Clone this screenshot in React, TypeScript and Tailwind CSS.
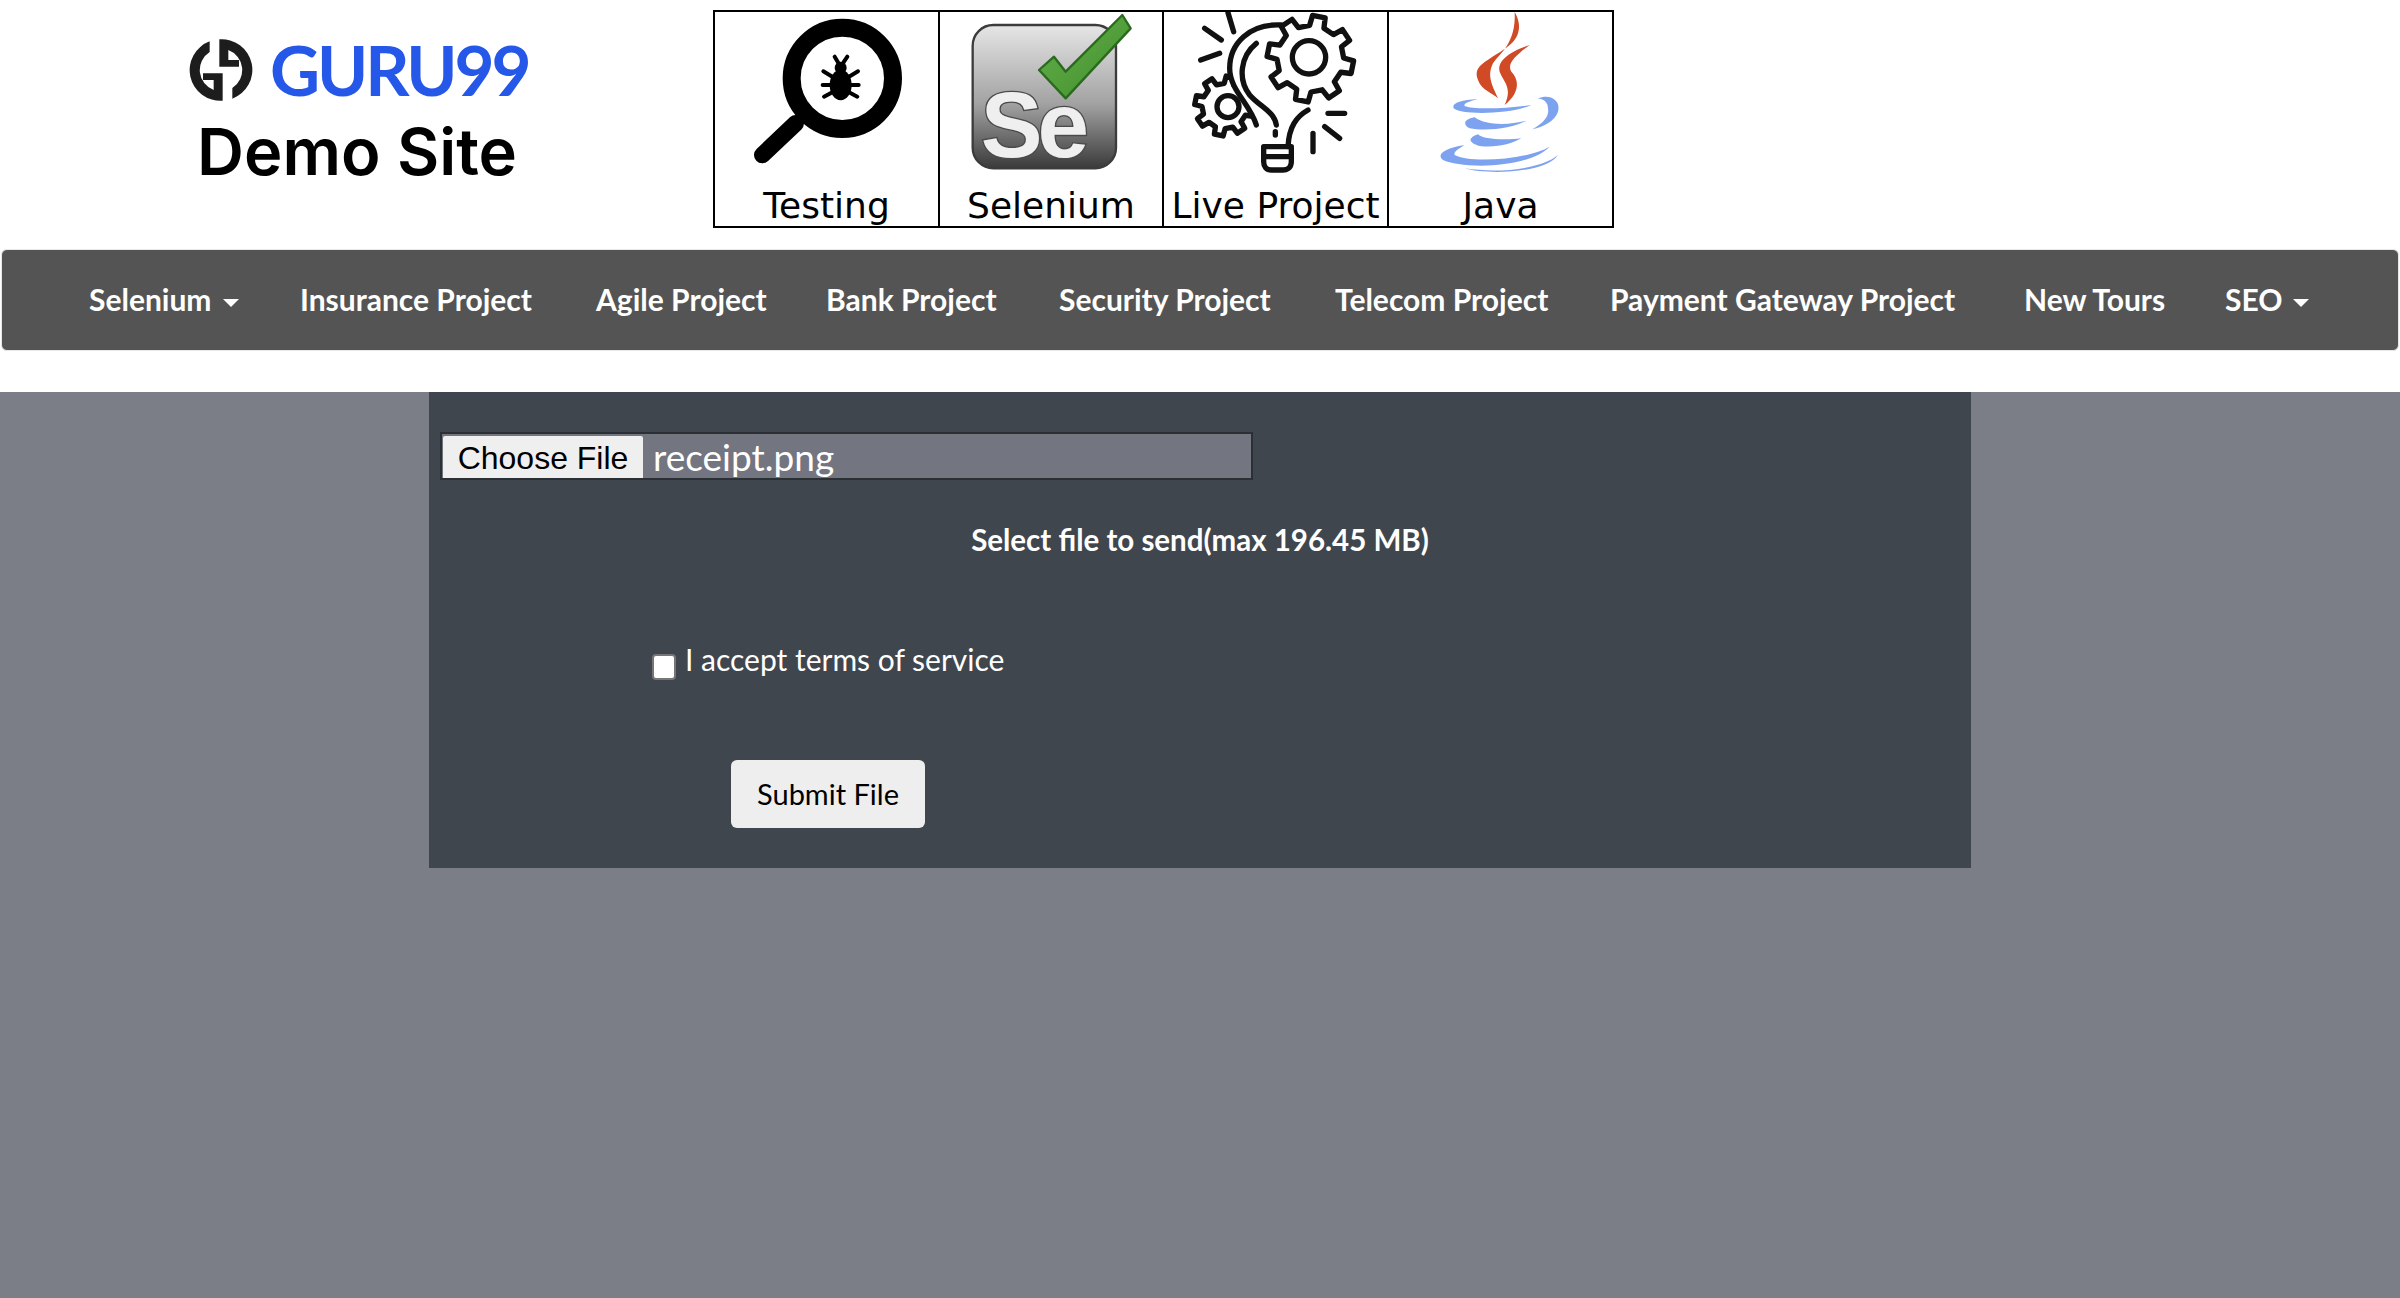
const navFont = "font-['Lato','Noto_Sans',sans-serif]";

const navItems = [
  { label: "Selenium", width: "w-[211px]", caret: true },
  { label: "Insurance Project", width: "w-[296px]" },
  { label: "Agile Project", width: "w-[230px]" },
  { label: "Bank Project", width: "w-[233px]" },
  { label: "Security Project", width: "w-[276px]" },
  { label: "Telecom Project", width: "w-[275px]" },
  { label: "Payment Gateway Project", width: "w-[414px]" },
  { label: "New Tours", width: "w-[201px]" },
  { label: "SEO", width: "w-[120px]", caret: true },
];

// builds a toothed outline for the gears in the Live Project icon
const gearPath = (cx: number, cy: number, outer: number, root: number, teeth: number) => {
  const step = (Math.PI * 2) / teeth;
  const pts: string[] = [];
  for (let i = 0; i < teeth; i++) {
    const a = i * step + 0.2;
    const at = (r: number, t: number) => {
      const x = cx + r * Math.cos(a + t * step);
      const y = cy + r * Math.sin(a + t * step);
      return `${x.toFixed(1)} ${y.toFixed(1)}`;
    };
    pts.push(at(root, -0.28), at(outer, -0.19), at(outer, 0.19), at(root, 0.28));
  }
  return `M${pts.join("L")}Z`;
};

const logoHalf =
  "M98 42A92 92 0 0 0 137 220V138H78V158H110V188A64 64 0 0 1 98 74Z";

const Logo = () => (
  <svg viewBox="36 32 192 192" className="w-[64px] h-[64px] shrink-0">
    <path d={logoHalf} fill="#1d1d1d" />
    <path d={logoHalf} fill="#1d1d1d" transform="rotate(180 132 128)" />
  </svg>
);

const TestingIcon = () => (
  <svg viewBox="40 36 675 540" className="w-[225px] h-[180px] shrink-0">
    <circle cx="425" cy="235" r="152" fill="none" stroke="#000" strokeWidth="54" />
    <path d="M285 370L185 465" stroke="#000" strokeWidth="50" strokeLinecap="round" />
    <ellipse cx="420" cy="255" rx="33" ry="46" fill="#000" />
    <circle cx="420" cy="203" r="18" fill="#000" />
    <path
      d="M420 200L402 170M420 200L440 170M395 230L368 214M445 230L472 214M393 255L366 255M447 255L474 255M398 275L370 290M442 275L470 290"
      stroke="#000"
      strokeWidth="12"
      strokeLinecap="round"
      fill="none"
    />
  </svg>
);

const SeleniumIcon = () => (
  <svg viewBox="715 36 675 540" className="w-[225px] h-[180px] shrink-0">
    <defs>
      <linearGradient id="seBox" x1="0" y1="0" x2="0" y2="1">
        <stop offset="0" stopColor="#e6e6e6" />
        <stop offset="0.55" stopColor="#a2a2a2" />
        <stop offset="1" stopColor="#3a3a3a" />
      </linearGradient>
      <linearGradient id="seCheck" x1="0" y1="0" x2="1" y2="1">
        <stop offset="0" stopColor="#66b04a" />
        <stop offset="1" stopColor="#3f8f2e" />
      </linearGradient>
    </defs>
    <rect x="816" y="75" width="430" height="430" rx="62" fill="url(#seBox)" stroke="#3c3c3c" strokeWidth="7" />
    <text
      x="840"
      y="470"
      fontSize="278"
      fontWeight="700"
      fontFamily="'Liberation Sans', sans-serif"
      fill="#efefef"
      stroke="#4a4a4a"
      strokeWidth="8"
      paintOrder="stroke"
      textLength="325"
    >
      Se
    </text>
    <path
      d="M1015 210L1060 170L1095 215L1265 45L1290 85L1095 295Z"
      fill="url(#seCheck)"
      stroke="#2a6a1f"
      strokeWidth="7"
      strokeLinejoin="round"
    />
  </svg>
);

const LiveProjectIcon = () => (
  <svg
    viewBox="40 36 675 540"
    className="w-[225px] h-[180px] shrink-0"
    fill="none"
    stroke="#111"
    strokeWidth="16"
    strokeLinecap="round"
    strokeLinejoin="round"
  >
    <path d={gearPath(225, 318, 90, 68, 8)} />
    <circle cx="235" cy="320" r="33" />
    <path
      d="M395 75C300 70 240 130 240 205C240 270 300 310 320 375C330 400 340 420 345 440H425C420 380 440 350 475 330L480 100Z"
      fill="#fff"
      stroke="none"
    />
    <path d="M395 75C300 70 240 130 240 205C240 270 300 310 320 375" />
    <path d="M320 130C270 170 265 240 300 285C330 320 375 335 380 375" />
    <path d="M475 330C440 350 418 380 415 440" />
    <path d={gearPath(482, 176, 130, 100, 8)} fill="#fff" />
    <circle cx="478" cy="172" r="50" />
    <path d="M377 395V405" />
    <path d="M342 440H425V485C425 505 410 510 400 510H365C350 510 342 500 342 485ZM342 470H425" />
    <path d="M235 38L252 95M165 85L215 120M153 180L210 160M535 340H585M525 380L570 415M490 400V455" />
  </svg>
);

const JavaIcon = () => (
  <svg viewBox="715 36 675 540" className="w-[225px] h-[180px] shrink-0">
    <g fill="#d04a26">
      <path d="M1095 36C1120 80 1110 120 1060 150C1000 190 970 200 985 240C995 270 1030 280 1045 295C1030 260 1010 230 1030 190C1050 160 1100 130 1095 36Z" />
      <path d="M1140 135C1090 150 1040 180 1050 215C1060 245 1090 260 1065 315C1110 280 1110 240 1085 215C1070 190 1100 165 1140 135Z" />
    </g>
    <g fill="#7da3f0">
      <path d="M985 297C930 300 905 310 912 325C930 345 1080 345 1145 315C1080 325 970 330 945 318C940 310 960 303 985 297Z" />
      <path d="M1165 295C1200 280 1235 300 1225 335C1215 365 1180 380 1148 388C1180 370 1200 350 1195 325C1195 305 1180 298 1165 295Z" />
      <path d="M975 352C940 358 940 375 960 385C1010 395 1090 385 1130 362C1080 375 1010 378 975 352Z" />
      <path d="M985 403C950 415 960 430 990 438C1040 445 1090 430 1115 415C1070 420 1000 420 985 403Z" />
      <path d="M945 435C880 445 860 465 880 480C930 505 1130 510 1200 440C1130 480 960 490 915 465C910 455 930 445 945 435Z" />
      <path d="M945 505C1040 520 1170 510 1225 465C1190 520 1010 525 945 505Z" />
    </g>
  </svg>
);

const tiles = [
  { label: "Testing", width: "w-[223px]", icon: <TestingIcon /> },
  { label: "Selenium", width: "w-[224px]", icon: <SeleniumIcon /> },
  { label: "Live Project", width: "w-[225px]", icon: <LiveProjectIcon /> },
  { label: "Java", width: "w-[225px]", icon: <JavaIcon /> },
];

const Caret = () => (
  <span className="inline-block ml-[11px] align-middle border-x-[8px] border-x-transparent border-t-[8px] border-t-white" />
);

export default function App() {
  return (
    <div className="min-h-screen flex flex-col bg-white">
      <header className="h-[249px] flex items-start">
        <div className="w-[713px] pl-[189px] pt-[34px]">
          <div className="flex items-center gap-[17px]">
            <Logo />
            <span className="font-['Lato',sans-serif] text-[69px] leading-[72px] tracking-[-3px] font-bold text-[#2557e8]">
              GURU99
            </span>
          </div>
          <div className="w-[336px] mt-[10px] text-center font-['Inter',sans-serif] text-[65px] leading-[72px] font-semibold text-black">
            Demo Site
          </div>
        </div>
        <div className="mt-[10px] flex border-2 border-black">
          {tiles.map((tile) => (
            <div key={tile.label} className={`${tile.width} h-[214px] border-l-2 first:border-l-0 border-black flex flex-col items-center overflow-hidden`}>
              <div className="h-[175px] shrink-0 flex justify-center">{tile.icon}</div>
              <span className="font-['DejaVu_Sans',sans-serif] text-[36px] leading-[38px] whitespace-nowrap text-black">
                {tile.label}
              </span>
            </div>
          ))}
        </div>
      </header>

      <nav className={`mx-[1px] h-[102px] pb-[2px] flex items-center pl-[87px] rounded-[6px] bg-[#545454] border border-[#e7e7e7] ${navFont}`}>
        {navItems.map((item) => (
          <a key={item.label} className={`${item.width} shrink-0 text-white text-[30px] font-bold whitespace-nowrap`}>
            {item.label}
            {item.caret && <Caret />}
          </a>
        ))}
      </nav>

      <main className="mt-[41px] flex-1 bg-[#7b7e87] flex justify-center items-start">
        <section className="w-[1542px] h-[476px] bg-[#3f464e] pt-[40px] pl-[11px] flex flex-col">
          <div className="w-[813px] h-[48px] flex items-stretch bg-[#737580] border-2 border-[#2b3035] pt-[2px] pl-[1px]">
            <button className="w-[200px] bg-[#efefef] text-black font-['Liberation_Sans',sans-serif] text-[32px] leading-none pt-[2px] rounded-t-[2px]">
              Choose File
            </button>
            <span className={`pl-[10px] text-[37px] leading-[42px] text-white ${navFont}`}>receipt.png</span>
          </div>

          <p className={`mt-[41px] -ml-[11px] text-center text-white text-[29.5px] leading-[38px] font-bold ${navFont}`}>
            Select file to send(max 196.45 MB)
          </p>

          <label className={`mt-[81px] ml-[212px] flex items-start text-white text-[30px] leading-[38px] ${navFont}`}>
            <input type="checkbox" className="w-[24px] h-[26px] mt-[14px] mr-[9px] appearance-none bg-white border-2 border-[#767676] rounded-[4px]" />
            I accept terms of service
          </label>

          <button className={`mt-[80px] ml-[291px] w-[194px] h-[68px] rounded-[6px] bg-[#eeeeee] text-black text-[29px] ${navFont}`}>
            Submit File
          </button>
        </section>
      </main>
    </div>
  );
}
